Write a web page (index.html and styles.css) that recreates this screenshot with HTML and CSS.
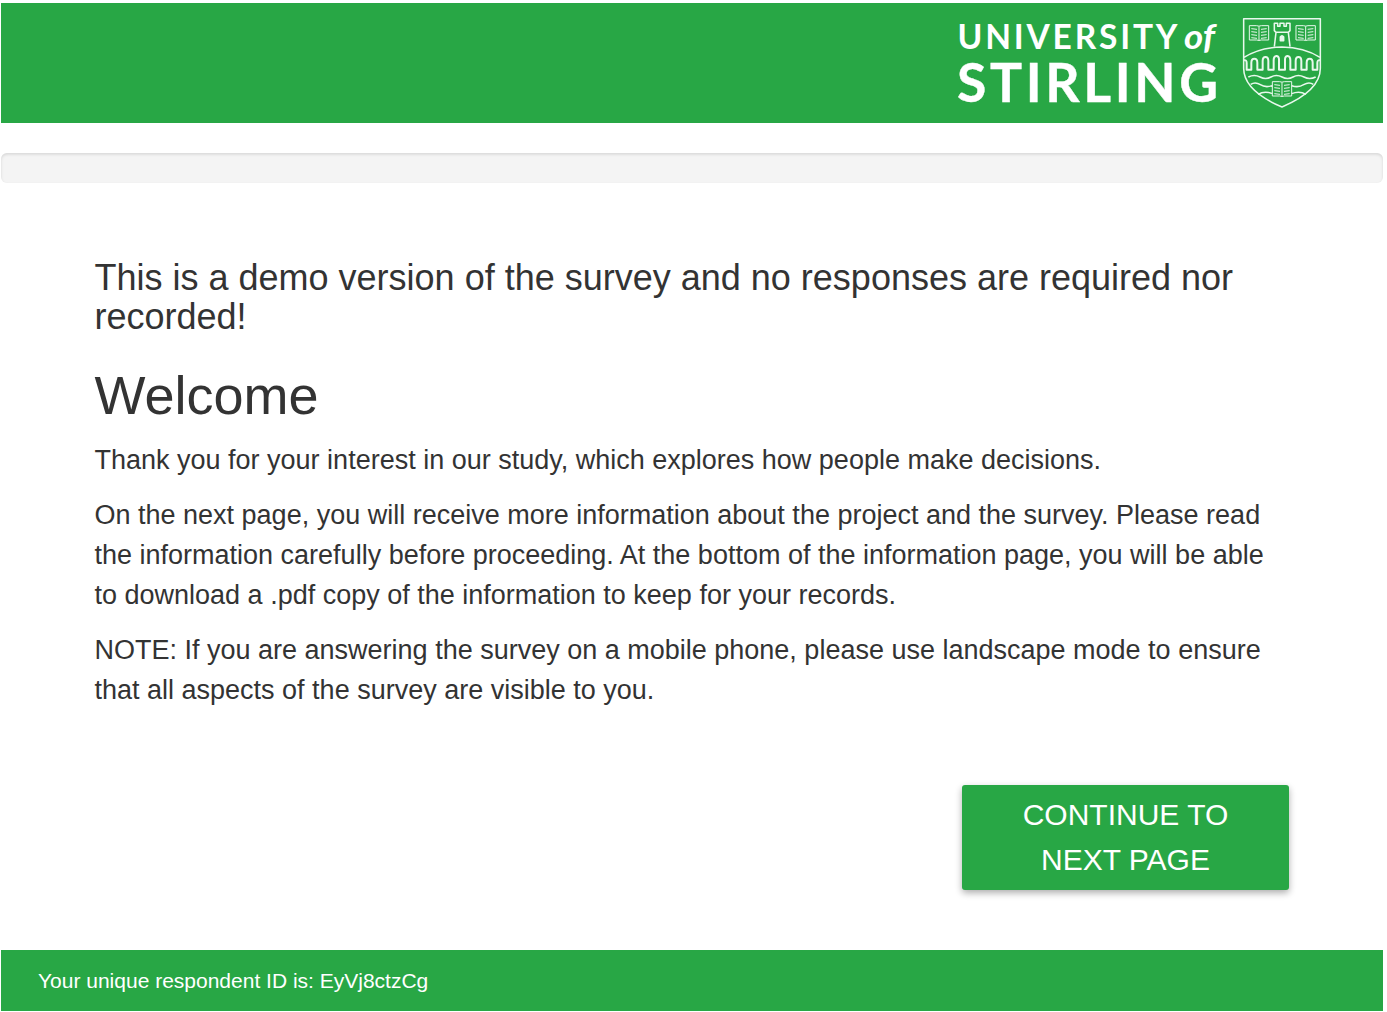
FILE: index.html
```html
<!DOCTYPE html>
<html lang="en">
<head>
<meta charset="utf-8">
<title>Survey</title>
<link rel="stylesheet" href="styles.css">
</head>
<body>
<header class="header">
  <svg class="logo" viewBox="950 3 390 120" role="img" aria-label="University of Stirling">
    <g class="wordmark">
      <text class="small" x="957.5" y="48.5" textLength="220" lengthAdjust="spacing">UNIVERSITY</text>
      <text class="of" x="1184" y="48.5" textLength="31" lengthAdjust="spacingAndGlyphs">of</text>
      <text class="large" x="957" y="102" textLength="261" lengthAdjust="spacing">STIRLING</text>
    </g>
    <g class="shield" transform="translate(1230 5) scale(.33333)">
      <path class="edge" d="M41 41H271V190C271 240 220 279 156 306C92 279 41 240 41 190Z"/>
      <path d="M42 157Q90 127 156 126Q222 127 270 157"/>
      <path d="M133 125L138 82L133 77V55H143V64H150V55H162V64H169V55H180V77L175 82L180 125M138 82H175"/>
      <path class="solid" d="M151 107V96Q156 88 161 96V107Z"/>
      <path class="arches" d="M42 166Q50 164 50 174V194H64V173C64 157 82 157 82 173V194H98V168C98 152 115 152 115 168V194H131V165C131 149 147 149 147 163V194H165V163C165 149 181 149 181 165V194H197V168C197 152 214 152 214 168V194H230V173C230 157 248 157 248 173V194H262V174Q262 164 270 166"/>
      <path d="M55 216Q73 207 90 216T123 216T156 216T189 216T222 216T257 216M62 238Q76 229 91 239T127 242M185 242Q205 249 221 239T250 238M84 268Q104 256 127 266M185 266Q208 256 228 268"/>
      <g id="book"><path class="page" d="M58 62H80Q87 65 94 62H116V105H94Q87 108 80 105H58ZM87 64V106M64 71L81 73M64 80L81 82M64 89L81 91M64 98L81 100M93 73L110 71M93 82L110 80M93 91L110 89M93 100L110 98"/></g>
      <use href="#book" x="140"/>
      <use href="#book" x="69" y="168"/>
    </g>
  </svg>
</header>
<div class="progress"></div>
<main class="content">
  <h3>This is a demo version of the survey and no responses are required nor recorded!</h3>
  <h1>Welcome</h1>
  <p>Thank you for your interest in our study, which explores how people make decisions.</p>
  <p>On the next page, you will receive more information about the project and the survey. Please read the information carefully before proceeding. At the bottom of the information page, you will be able to download a .pdf copy of the information to keep for your records.</p>
  <p>NOTE: If you are answering the survey on a mobile phone, please use landscape mode to ensure that all aspects of the survey are visible to you.</p>
</main>
<div class="actions"><button class="next" type="button">CONTINUE TO NEXT PAGE</button></div>
<footer class="footer">Your unique respondent ID is: EyVj8ctzCg</footer>
</body>
</html>
```
FILE: styles.css
```css
* { box-sizing: border-box; }
body {
  margin: 0;
  padding: 3px 4px 0 1px;
  height: 1012px;
  overflow: hidden;
  display: flex;
  flex-direction: column;
  background: #fff;
  color: #333;
  font-family: "Liberation Sans", Arial, sans-serif;
}
.header {
  height: 120px;
  flex: none;
  display: flex;
  justify-content: flex-end;
  padding-right: 43px;
  background: #28a745;
}
.logo { width: 390px; height: 120px; }
.wordmark { fill: #fff; font-family: Lato, sans-serif; font-weight: 700; }
.small { font-size: 33.5px; }
.of { font-size: 34px; font-style: italic; }
.large { font-size: 53.5px; stroke: #fff; stroke-width: .4; }
.shield { fill: none; stroke: #e9f8ed; stroke-width: 4.6; stroke-linejoin: round; }
.arches { stroke-width: 6; }
.page { stroke-width: 3; }
.solid { fill: #e9f8ed; }
.progress {
  height: 30px;
  flex: none;
  margin-top: 30px;
  border-radius: 6px;
  background: #f4f4f4;
  box-shadow: inset 0 1.5px 3px rgba(0, 0, 0, .12);
}
.content { width: 1190px; margin: 75px 0 0 93.5px; }
h1, h3 { margin: 0; font-weight: 400; line-height: 1.1; }
h3 { font-size: 36px; line-height: 39px; }
h1 { font-size: 54px; margin: 30px 0 15px; }
p { margin: 0 0 15px; font-size: 27px; line-height: 40px; }
.actions { display: flex; justify-content: flex-end; margin-top: 60px; padding-right: 94px; }
.next {
  width: 327px;
  height: 105px;
  padding: 0 45px 1px;
  border: 0;
  border-radius: 3px;
  background: #28a745;
  color: #fff;
  font: 30px/45px "Liberation Sans", Arial, sans-serif;
  box-shadow: 0 3px 7px rgba(0, 0, 0, .32);
}
.footer {
  height: 61px;
  flex: none;
  margin-top: 60px;
  padding-left: 37px;
  background: #28a745;
  color: #fff;
  font-size: 21px;
  line-height: 61px;
}
```
